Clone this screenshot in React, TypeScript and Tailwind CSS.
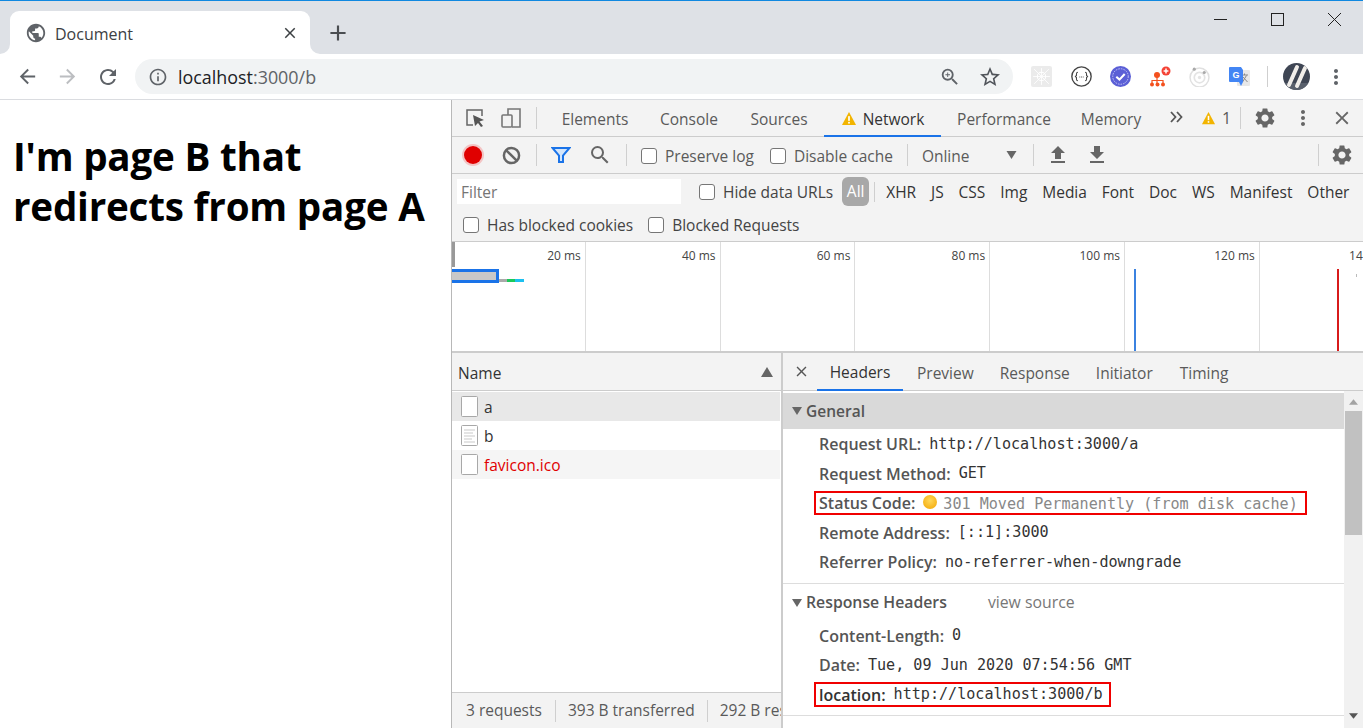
import type { ReactNode } from "react";
import {
  MdAdd,
  MdArrowBack,
  MdArrowForward,
  MdClose,
  MdFileDownload,
  MdFileUpload,
  MdInfoOutline,
  MdMoreVert,
  MdPublic,
  MdRefresh,
  MdSearch,
  MdSettings,
  MdStarBorder,
  MdZoomIn,
} from "react-icons/md";

const Warning = ({ className }: { className: string }) => (
  <svg viewBox="0 0 16 16" className={className}>
    <path d="M8 1 L15.5 15 H0.5 Z" fill="#f2b400" />
    <rect x="7.1" y="5.5" width="1.8" height="5" fill="#fff" />
    <rect x="7.1" y="11.6" width="1.8" height="1.8" fill="#fff" />
  </svg>
);

const Check = ({ label, className }: { label: string; className?: string }) => (
  <div className={`flex items-center gap-[8px] text-[#5a5a5a] ${className ?? ""}`}>
    <span className="w-4 h-4 rounded-[3px] border border-[#767676] bg-white shrink-0"></span>
    <span className="whitespace-nowrap pt-[2px]">{label}</span>
  </div>
);

const Sep = ({ className }: { className: string }) => <span className={`w-px bg-[#cfcfcf] shrink-0 ${className}`}></span>;

const Row = ({ name, children }: { name: string; children: ReactNode }) => (
  <div className="h-[29.5px] pl-[36px] flex items-center whitespace-nowrap">
    <b className="font-semibold text-[16px] text-[#555]">{name}</b>
    <span className="ml-[8px] font-['DejaVu_Sans_Mono',monospace] text-[15.1px] text-[#333]">{children}</span>
  </div>
);

const FileIcon = ({ lines }: { lines?: boolean }) => (
  <svg viewBox="0 0 17 21" className="w-[17px] h-[21px] ml-[9px] mr-[6px] shrink-0">
    <rect x="0.5" y="0.5" width="16" height="20" rx="1" fill="#fff" stroke="#a8a8a8" />
    {lines && <path d="M3 5h11M3 8h9M3 11h11M3 14h8M3 17h11" stroke="#c9c9c9" strokeWidth="1" />}
  </svg>
);

const devTabs = [
  ["Elements", "w-[98px]"],
  ["Console", "w-[90px]"],
  ["Sources", "w-[90px]"],
];

const filterTypes = ["XHR", "JS", "CSS", "Img", "Media", "Font", "Doc", "WS", "Manifest", "Other"];
const ticks = ["20 ms", "40 ms", "60 ms", "80 ms", "100 ms", "120 ms", "140 ms"];

export default function App() {
  return (
    <div className="w-[1363px] h-[728px] overflow-hidden bg-white flex flex-col font-['Open_Sans',sans-serif] text-[15.5px]">
      <div className="h-px bg-[#1088e0] shrink-0"></div>

      {/* tab strip */}
      <div className="h-[53px] shrink-0 bg-[#dee1e6] flex items-end pl-[10px] relative">
        <div className="relative w-[300px] h-[43px] bg-white rounded-t-[9px] flex items-center pl-[16px] pr-[11px] text-[#3c4043]">
          <svg viewBox="0 0 10 10" className="absolute -left-[10px] bottom-0 w-[10px] h-[10px]">
            <path d="M10 0 V10 H0 A10 10 0 0 0 10 0 Z" fill="#fff" />
          </svg>
          <svg viewBox="0 0 10 10" className="absolute -right-[10px] bottom-0 w-[10px] h-[10px]">
            <path d="M0 0 V10 H10 A10 10 0 0 1 0 0 Z" fill="#fff" />
          </svg>
          <MdPublic className="w-[22px] h-[22px] text-[#5f6368] -ml-[1px]" />
          <span className="ml-[8px] pt-[2px] text-[16px]">Document</span>
          <MdClose className="ml-auto w-[18px] h-[18px] text-[#3c4043]" />
        </div>
        <MdAdd className="w-[26px] h-[26px] text-[#4a4d51] ml-[15px] mb-[8px]" />
        <div className="ml-auto flex self-start text-[#222]">
          <div className="w-[57px] h-[36px] flex items-center justify-center">
            <span className="w-[13px] h-px bg-[#222] mt-[1px]"></span>
          </div>
          <div className="w-[57px] h-[36px] flex items-center justify-center">
            <span className="w-[13px] h-[13px] border border-[#222] mt-[1px]"></span>
          </div>
          <div className="w-[57px] h-[36px] flex items-center justify-center">
            <svg viewBox="0 0 13 13" className="w-[13px] h-[13px] mt-[1px]">
              <path d="M0 0 L13 13 M13 0 L0 13" stroke="#222" strokeWidth="1" />
            </svg>
          </div>
        </div>
      </div>

      {/* address bar */}
      <div className="h-[46px] shrink-0 bg-white border-b border-[#dadce0] flex items-center text-[#5f6368]">
        <MdArrowBack className="w-[23px] h-[23px] ml-[16px]" />
        <MdArrowForward className="w-[23px] h-[23px] ml-[17px] text-[#bcbec1]" />
        <MdRefresh className="w-[24px] h-[24px] ml-[17px]" />
        <div className="ml-[15px] w-[878px] h-[35px] rounded-full bg-[#f1f3f4] flex items-center pl-[13px] pr-[11px]">
          <MdInfoOutline className="w-[20px] h-[20px]" />
          <span className="ml-[10px] pt-[2px] text-[17.9px] text-[#202124]">
            localhost<span className="text-[#5f6368]">:3000/b</span>
          </span>
          <MdZoomIn className="ml-auto w-[22px] h-[22px]" />
          <MdStarBorder className="ml-[17px] w-[24px] h-[24px] text-[#50545a]" />
        </div>
        <div className="flex items-center ml-[18px]">
          <svg viewBox="0 0 20 20" className="w-[21px] h-[21px]">
            <rect width="20" height="20" rx="2" fill="#ebebeb" />
            <path d="M3 3 L17 17 M17 3 L3 17 M10 2 V18 M2 10 H18" stroke="#fff" strokeWidth="0.8" />
            <circle cx="10" cy="10" r="4" fill="none" stroke="#fff" strokeWidth="1" />
          </svg>
          <svg viewBox="0 0 20 20" className="w-[21px] h-[21px] ml-[19px]">
            <circle cx="10" cy="10" r="9.2" fill="#fff" stroke="#444" strokeWidth="1.3" />
            <path d="M6.6 6 Q5.2 6 5.2 7.5 V9 L4.2 10 L5.2 11 V12.5 Q5.2 14 6.6 14 M13.4 6 Q14.8 6 14.8 7.5 V9 L15.8 10 L14.8 11 V12.5 Q14.8 14 13.4 14" fill="none" stroke="#444" strokeWidth="1" />
            <path d="M8 10.5h.8M9.6 10.5h.8M11.2 10.5h.8" stroke="#444" strokeWidth="1" />
          </svg>
          <svg viewBox="0 0 20 20" className="w-[21px] h-[21px] ml-[18px]">
            <circle cx="10" cy="10" r="10" fill="#5b5fd6" />
            <circle cx="10" cy="10" r="7.4" fill="none" stroke="#c9caf5" strokeWidth="0.9" strokeDasharray="1.5 1" />
            <path d="M6 10.3 L9 13 L14 7.6" fill="none" stroke="#fff" strokeWidth="2" />
          </svg>
          <svg viewBox="0 0 22 22" className="w-[22px] h-[22px] ml-[18px]">
            <circle cx="8" cy="9" r="3" fill="#f4511e" />
            <path d="M8 11 V14 M3 17 V14.5 H14 V17 M8 14 V17" fill="none" stroke="#f4511e" strokeWidth="1.2" />
            <circle cx="3" cy="18.5" r="2" fill="#f4511e" />
            <circle cx="8.5" cy="18.5" r="2" fill="#f4511e" />
            <circle cx="14" cy="18.5" r="2" fill="#f4511e" />
            <circle cx="17" cy="5" r="4.5" fill="#f44336" />
            <path d="M14.6 5 H19.4 M17 2.6 V7.4" stroke="#fff" strokeWidth="1.5" />
          </svg>
          <svg viewBox="0 0 20 20" className="w-[21px] h-[21px] ml-[18px]">
            <circle cx="10" cy="11" r="9" fill="#fff" stroke="#e0e0e0" strokeWidth="1.4" />
            <circle cx="10" cy="11" r="5" fill="none" stroke="#e4e4e4" strokeWidth="1.6" />
            <circle cx="10" cy="11" r="1.6" fill="#e4e4e4" />
            <circle cx="5" cy="3" r="1.5" fill="#a9a9a9" />
            <circle cx="14.5" cy="6.2" r="1.5" fill="#a9a9a9" />
          </svg>
          <svg viewBox="0 0 21 21" className="w-[21px] h-[21px] ml-[19px]">
            <rect x="8" y="4" width="13" height="16" rx="1" fill="#e8e8e8" />
            <path d="M12 9 H19 M15.5 7.5 V9 M13.5 16 L17.5 9.5 M14 11 L18.5 16" fill="none" stroke="#888" strokeWidth="1" />
            <path d="M1 1 Q0 1 0 2 V15 Q0 16 1 16 H10 L12 20 L14 16 V4 L12 1 Z" fill="#4285f4" />
            <text x="3.5" y="12" fontSize="9" fontWeight="700" fill="#fff" fontFamily="'Liberation Sans', sans-serif">G</text>
          </svg>
          <Sep className="h-[21px] ml-[17px]" />
          <div className="w-[27px] h-[27px] ml-[15px] rounded-full bg-[#3f4654] overflow-hidden flex items-center justify-center">
            <svg viewBox="0 0 27 27" className="w-[27px] h-[27px]">
              <path d="M0 20 H27 V27 H0 Z" fill="#59606c" />
              <path d="M6 22 L14 4 M14 23 L22 5" stroke="#f1eeea" strokeWidth="4" strokeLinecap="round" />
            </svg>
          </div>
          <MdMoreVert className="w-[24px] h-[24px] ml-[14px] text-[#5f6368]" />
        </div>
      </div>

      <div className="flex-1 flex min-h-0">
        {/* inspected page */}
        <div className="w-[451px] shrink-0 pl-[13px] pt-[31px]">
          <h1 className="font-['Open_Sans',sans-serif] font-bold text-[38.6px] leading-[50px] tracking-[-0.2px] text-black whitespace-nowrap">
            I'm page B that
            <br />
            redirects from page A
          </h1>
        </div>

        {/* devtools */}
        <div className="flex-1 min-w-0 flex flex-col border-l border-[#b8b8b8] bg-[#f3f3f3] text-[#5a5a5a]">
          <div className="h-[37px] shrink-0 border-b border-[#ccc] flex items-center relative">
            <svg viewBox="0 0 20 20" className="w-[20px] h-[20px] ml-[13px]">
              <path d="M8 17 H2 V2 H17 V8" fill="none" stroke="#666" strokeWidth="1.5" />
              <path d="M8 7 L19 12 L14.5 13.5 L18 18 L16 19 L13 15 L10 18 Z" fill="#555" />
            </svg>
            <svg viewBox="0 0 22 22" className="w-[22px] h-[22px] ml-[15px]">
              <path d="M8 8 V2 H20 V20 H12" fill="none" stroke="#777" strokeWidth="1.6" />
              <rect x="2" y="8" width="10" height="12" rx="1" fill="none" stroke="#777" strokeWidth="1.6" />
            </svg>
            <Sep className="h-[22px] ml-[14px]" />
            <div className="flex h-full ml-[9px]">
              {devTabs.map(([t, w]) => (
                <div key={t} className={`${w} pt-[3px] flex items-center justify-center`}>{t}</div>
              ))}
              <div className="w-[117px] pt-[5px] flex items-center justify-center gap-[6px] text-[#333] border-b-2 border-[#1a73e8] h-[37px]">
                <Warning className="w-[16px] h-[15px] -mt-[4px]" />
                Network
              </div>
              <div className="w-[124px] ml-[1px] pt-[3px] flex items-center justify-center">Performance</div>
              <div className="w-[90px] pt-[3px] flex items-center justify-center">Memory</div>
            </div>
            <svg viewBox="0 0 14 12" className="w-[14px] h-[12px] ml-[13px] -mt-[3px]">
              <path d="M2 1 L6.5 6 L2 11 M8 1 L12.5 6 L8 11" fill="none" stroke="#555" strokeWidth="1.8" />
            </svg>
            <Warning className="w-[15px] h-[14px] ml-[18px]" />
            <span className="ml-[6px] text-[16px]">1</span>
            <Sep className="h-[22px] ml-[9px]" />
            <MdSettings className="w-[24px] h-[24px] ml-[12px] text-[#666]" />
            <MdMoreVert className="w-[24px] h-[24px] ml-[14px] text-[#666]" />
            <MdClose className="w-[22px] h-[22px] ml-[16px] text-[#666]" />
          </div>

          <div className="h-[37px] shrink-0 border-b border-[#ccc] flex items-center">
            <span className="w-[18px] h-[18px] ml-[12px] rounded-full bg-[#e00000] shadow-[0_0_0_2px_#f3c4c4]"></span>
            <svg viewBox="0 0 20 20" className="w-[19px] h-[19px] ml-[20px]">
              <circle cx="10" cy="10" r="8" fill="none" stroke="#666" strokeWidth="2.6" />
              <path d="M4.5 4.5 L15.5 15.5" stroke="#666" strokeWidth="2.6" />
            </svg>
            <Sep className="h-[22px] ml-[15px]" />
            <svg viewBox="0 0 20 18" className="w-[20px] h-[18px] ml-[14px]">
              <path d="M1.5 2 H18.5 L12 9.5 V16 H8 V9.5 Z" fill="#d4e6fb" stroke="#1a73e8" strokeWidth="2" />
            </svg>
            <MdSearch className="w-[24px] h-[24px] ml-[17px] text-[#666]" />
            <Sep className="h-[22px] ml-[14px]" />
            <Check label="Preserve log" className="ml-[14px] pt-[2px]" />
            <Check label="Disable cache" className="ml-[16px] pt-[2px]" />
            <Sep className="h-[22px] ml-[14px]" />
            <span className="ml-[14px] pt-[4px]">Online</span>
            <svg viewBox="0 0 10 8" className="w-[11px] h-[8px] ml-[36px]">
              <path d="M0 0 H10 L5 8 Z" fill="#666" />
            </svg>
            <Sep className="h-[22px] ml-[16px]" />
            <MdFileUpload className="w-[24px] h-[24px] ml-[12px] text-[#666]" />
            <MdFileDownload className="w-[24px] h-[24px] ml-[15px] text-[#666]" />
            <Sep className="h-[22px] ml-auto" />
            <MdSettings className="w-[24px] h-[24px] ml-[11px] mr-[9px] text-[#666]" />
          </div>

          <div className="h-[68px] shrink-0 border-b border-[#ccc] pl-[5px] flex flex-col">
            <div className="h-[35px] flex items-center">
              <div className="w-[224px] h-[25px] bg-white pl-[4px] pt-[2px] flex items-center text-[#757575]">Filter</div>
              <Check label="Hide data URLs" className="ml-[18px] text-[#444]" />
              <span className="ml-[9px] w-[27px] h-[29px] pt-[1px] rounded-[6px] bg-[#a8a8a8] text-white flex items-center justify-center">All</span>
              <Sep className="h-[20px] ml-[5px]" />
              <div className="flex ml-[11px] gap-[14.9px] pt-[2px] text-[#333]">
                {filterTypes.map((t) => (
                  <span key={t}>{t}</span>
                ))}
              </div>
            </div>
            <div className="h-[32px] flex items-center pl-[6px]">
              <Check label="Has blocked cookies" className="text-[#444]" />
              <Check label="Blocked Requests" className="ml-[15px] text-[#444]" />
            </div>
          </div>

          {/* overview */}
          <div className="h-[111px] shrink-0 bg-white border-b-2 border-[#ccc] relative overflow-hidden">
            <div className="flex h-full -ml-px">
              {ticks.map((t) => (
                <div key={t} className="w-[134.8px] shrink-0 border-r border-[#ddd] text-right pr-[4px] pt-[5px] text-[12px] leading-[18px] text-[#444] whitespace-nowrap">
                  {t}
                </div>
              ))}
            </div>
            <span className="absolute left-0 top-0 w-[3px] h-[25px] bg-[#999]"></span>
            <span className="absolute -left-px top-[27px] w-[48px] h-[14px] bg-[#c8c8c8] border-[3px] border-l-0 border-[#1a73e8]"></span>
            <span className="absolute left-[47px] top-[37px] w-[8px] h-[3px] bg-[#aaa]"></span>
            <span className="absolute left-[55px] top-[37px] w-[8px] h-[3px] bg-[#1cc95a]"></span>
            <span className="absolute left-[63px] top-[37px] w-[9px] h-[3px] bg-[#1cc0f0]"></span>
            <span className="absolute left-[682px] top-[27px] w-[1.5px] h-[84px] bg-[#3b82e0]"></span>
            <span className="absolute left-[885px] top-[27px] w-[1.5px] h-[84px] bg-[#d81b1b]"></span>
            <span className="absolute left-[904px] top-[32px] w-px h-[3px] bg-[#bbb]"></span>
          </div>

          <div className="flex-1 min-h-0 flex">
            {/* request list */}
            <div className="w-[331px] shrink-0 border-r-2 border-[#ccc] flex flex-col bg-white">
              <div className="h-[38px] shrink-0 bg-[#f3f3f3] border-b border-[#ccc] flex items-center pl-[6px] pr-[8px] text-[#333]">
                <span className="pt-[5px]">Name</span>
                <svg viewBox="0 0 12 10" className="w-[12px] h-[10px] ml-auto">
                  <path d="M0 10 H12 L6 0 Z" fill="#666" />
                </svg>
              </div>
              <div className="mt-px text-[#333] pr-[1px]">
                <div className="h-[29px] bg-[#e8e8e8] flex items-center"><FileIcon /><span className="pt-[2px]">a</span></div>
                <div className="h-[29px] bg-white flex items-center"><FileIcon lines /><span className="pt-[2px]">b</span></div>
                <div className="h-[29px] bg-[#f5f5f5] flex items-center text-[#e00000]"><FileIcon /><span className="pt-[2px]">favicon.ico</span></div>
              </div>
              <div className="mt-auto h-[36px] shrink-0 bg-[#f3f3f3] border-t border-[#ccc] flex items-center pl-[14px] whitespace-nowrap overflow-hidden">
                3 requests
                <Sep className="h-[22px] ml-[13px]" />
                <span className="ml-[12px]">393 B transferred</span>
                <Sep className="h-[22px] ml-[12px]" />
                <span className="ml-[12px]">292 B resources</span>
              </div>
            </div>

            {/* details */}
            <div className="flex-1 min-w-0 flex flex-col bg-white">
              <div className="h-[38px] shrink-0 bg-[#f3f3f3] border-b border-[#ccc] flex items-center">
                <MdClose className="w-[17px] h-[17px] ml-[10px] text-[#555]" />
                <div className="ml-[7px] w-[86px] h-[38px] pt-[4px] border-b-2 border-[#1a73e8] text-[#333] flex items-center justify-center">Headers</div>
                <span className="ml-[14px] pt-[4px]">Preview</span>
                <span className="ml-[26px] pt-[4px]">Response</span>
                <span className="ml-[26px] pt-[4px]">Initiator</span>
                <span className="ml-[27px] pt-[4px]">Timing</span>
              </div>
              <div className="flex-1 min-h-0 flex">
                <div className="flex-1 min-w-0 pt-[2px] overflow-hidden">
                  <div className="h-[36px] bg-[#d9d9d9] pl-[9px] flex items-center font-semibold text-[#555]">
                    <svg viewBox="0 0 10 8" className="w-[10px] h-[8px] mr-[4px]"><path d="M0 0 H10 L5 8 Z" fill="#666" /></svg>
                    <span className="pt-[2px]">General</span>
                  </div>
                  <div className="pt-[0.5px] pb-[6px] border-b border-[#ddd]">
                    <Row name="Request URL:">http://localhost:3000/a</Row>
                    <Row name="Request Method:">GET</Row>
                    <div className="h-[29.5px] flex items-center pl-[31px]">
                      <div className="w-[493px] h-[24px] border-2 border-[#f00000] pl-[3px] flex items-center whitespace-nowrap">
                        <b className="font-semibold text-[16px] text-[#555]">Status Code:</b>
                        <span className="ml-[8px] w-[14px] h-[14px] -mt-[3px] rounded-full bg-[radial-gradient(circle_at_50%_40%,#ffd75a,#f2a500)]"></span>
                        <span className="ml-[6px] pt-[2px] font-['DejaVu_Sans_Mono',monospace] text-[15.1px] text-[#888]">301 Moved Permanently (from disk cache)</span>
                      </div>
                    </div>
                    <Row name="Remote Address:">[::1]:3000</Row>
                    <Row name="Referrer Policy:">no-referrer-when-downgrade</Row>
                  </div>
                  <div className="h-[37px] pl-[9px] flex items-center font-semibold text-[15.8px] text-[#555]">
                    <svg viewBox="0 0 10 8" className="w-[10px] h-[8px] mr-[4px]"><path d="M0 0 H10 L5 8 Z" fill="#666" /></svg>
                    Response Headers
                    <span className="ml-[41px] font-normal text-[#777]">view source</span>
                  </div>
                  <div className="pb-[5px] border-b border-[#ddd]">
                    <Row name="Content-Length:">0</Row>
                    <Row name="Date:">Tue, 09 Jun 2020 07:54:56 GMT</Row>
                    <div className="h-[29.5px] flex items-center pl-[31px]">
                      <div className="w-[297px] h-[25px] border-2 border-[#f00000] pl-[3px] flex items-center whitespace-nowrap">
                        <b className="font-semibold text-[16px] text-[#333]">location:</b>
                        <span className="ml-[8px] font-['DejaVu_Sans_Mono',monospace] text-[15.1px] text-[#333]">http://localhost:3000/b</span>
                      </div>
                    </div>
                  </div>
                </div>
                <div className="w-[19px] shrink-0 bg-[#f1f1f1] flex flex-col items-center pt-[8px]">
                  <svg viewBox="0 0 10 6" className="w-[9px] h-[6px]"><path d="M0 6 H10 L5 0 Z" fill="#a3a3a3" /></svg>
                  <div className="w-[17px] h-[124px] mt-[6px] bg-[#c1c1c1]"></div>
                  <svg viewBox="0 0 10 6" className="w-[9px] h-[6px] mt-auto mb-[9px]"><path d="M0 0 H10 L5 6 Z" fill="#555" /></svg>
                </div>
              </div>
            </div>
          </div>
        </div>
      </div>
    </div>
  );
}
